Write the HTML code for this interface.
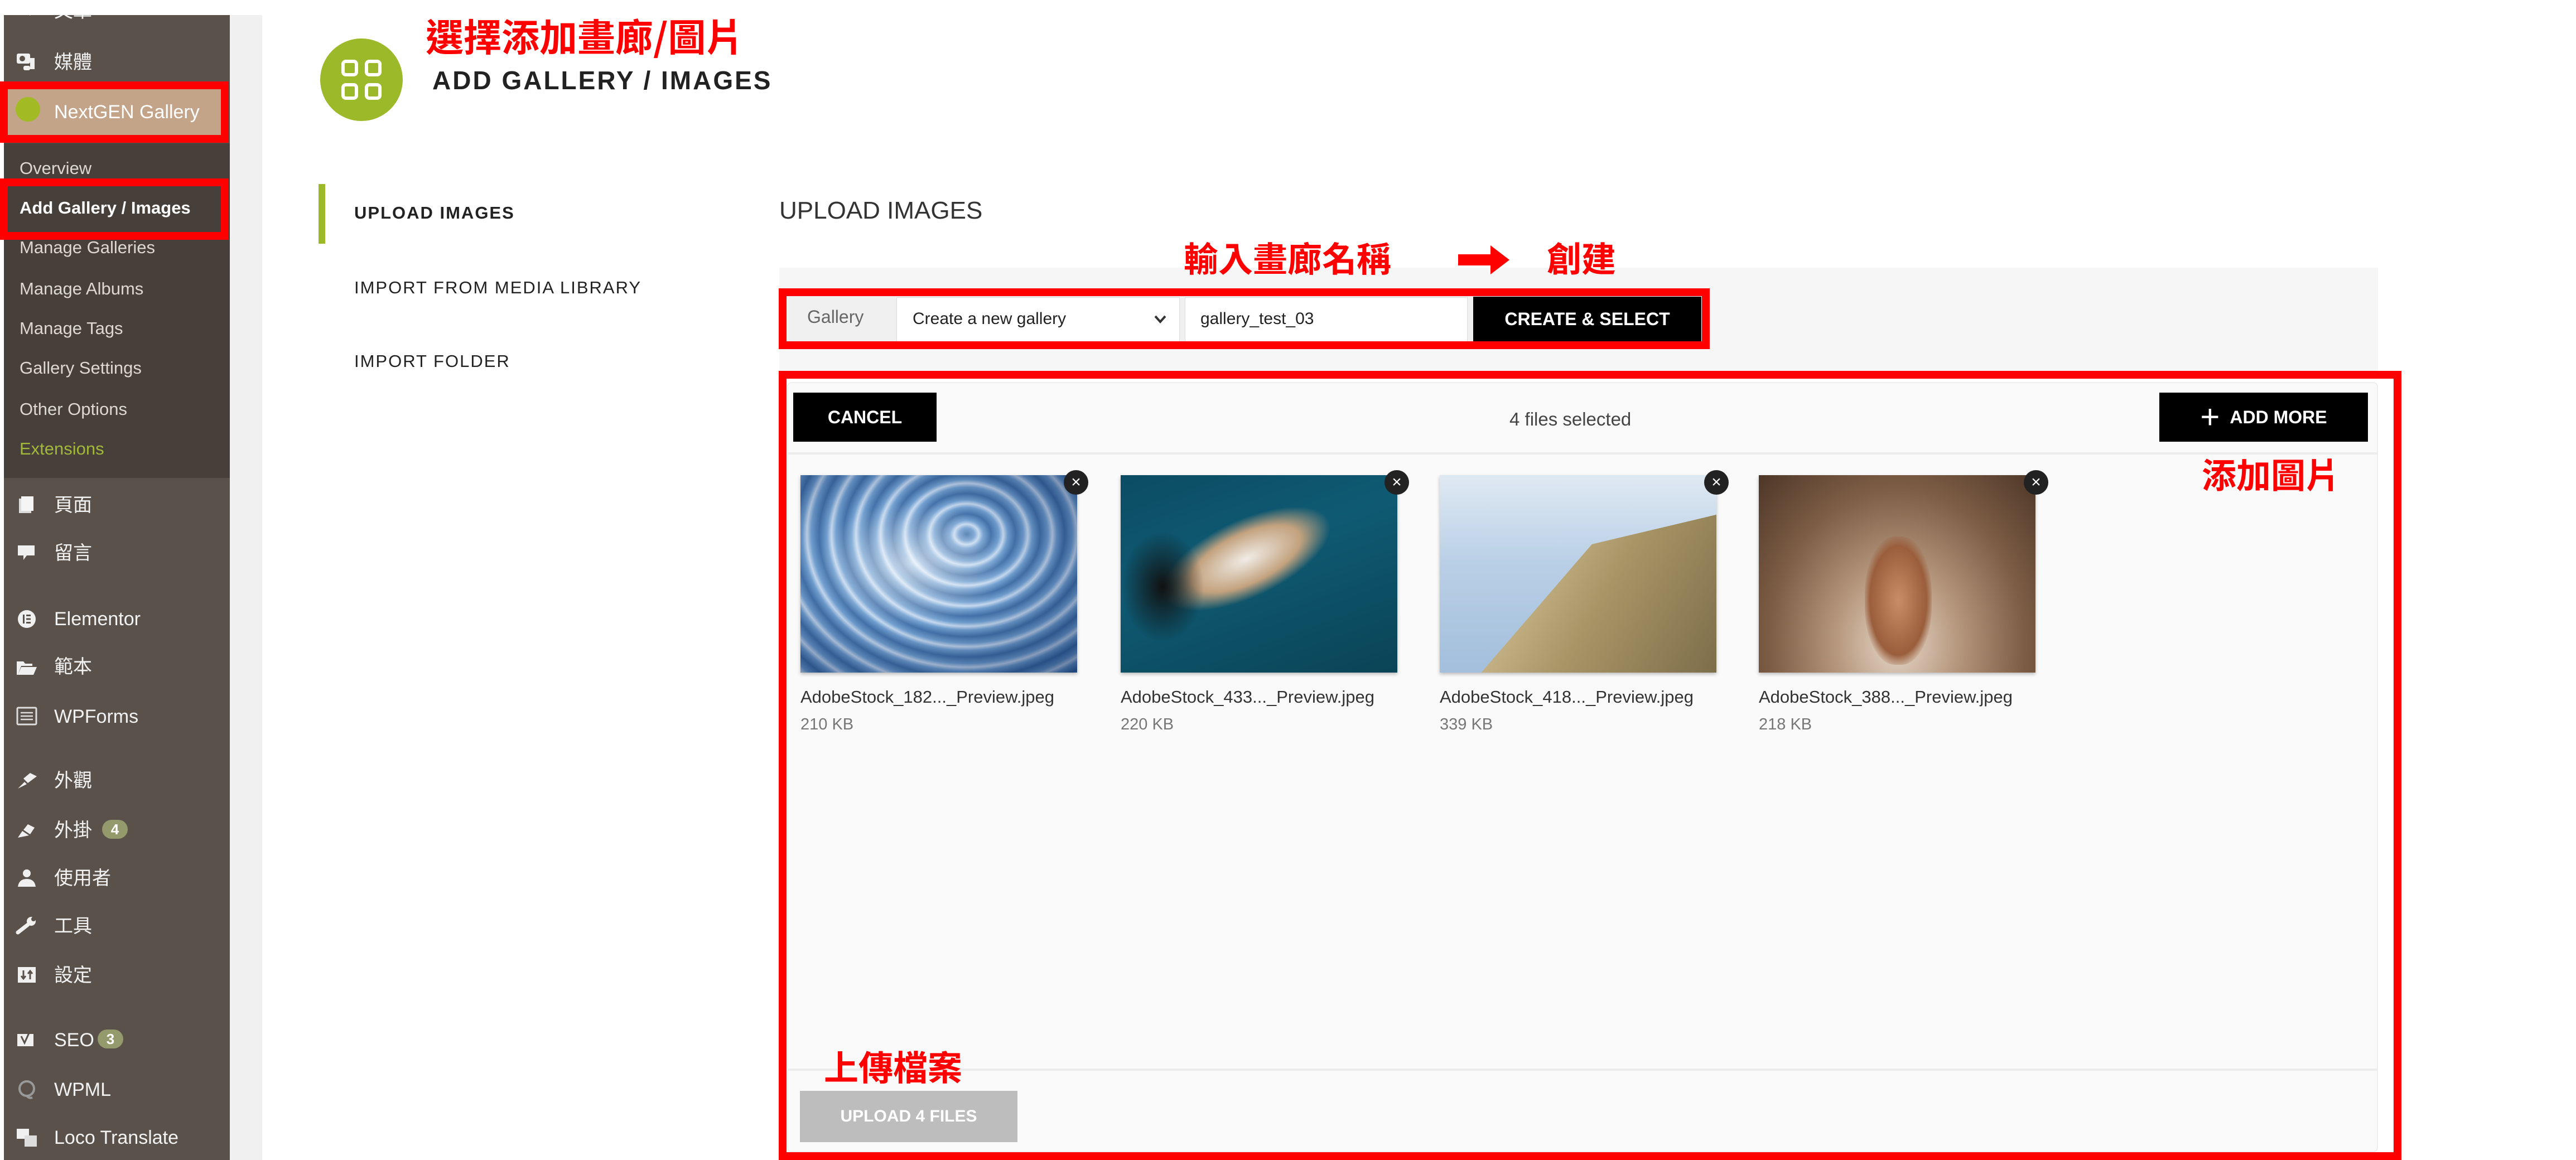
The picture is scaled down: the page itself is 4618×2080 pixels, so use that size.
<!DOCTYPE html>
<html><head><meta charset="utf-8"><style>
*{margin:0;padding:0;box-sizing:border-box}
body{width:4618px;height:2080px;background:#fff;position:relative;overflow:hidden;font-family:"Liberation Sans","Noto Sans CJK TC",sans-serif}
.a{position:absolute}
#side{position:absolute;left:0;top:27px;width:412px;height:2053px;overflow:hidden}
#side .in{position:absolute;left:0;top:-27px;width:412px;height:2080px}
.sb{left:7px;top:27px;width:405px;height:2053px;background:#5a514b}
.sub{left:7px;top:257px;width:405px;height:600px;background:#463f3a}
.mi{position:absolute;left:97px;color:#f2f2f2;font-size:34px;line-height:40px;white-space:nowrap}
.si{position:absolute;left:35px;color:#ddd8d3;font-size:31px;line-height:36px;white-space:nowrap}
.ic{position:absolute;left:28px;width:40px;height:36px}
.red{color:#f00;font-weight:bold;font-family:"Noto Sans CJK TC","Liberation Sans",sans-serif;white-space:nowrap}
.rb{position:absolute;border:14px solid #f00}
.nav{position:absolute;left:635px;font-size:31px;letter-spacing:2px;color:#222;white-space:nowrap}
.btn{position:absolute;background:#000;color:#fff;font-weight:bold;font-size:32px;display:flex;align-items:center;justify-content:center;white-space:nowrap}
.th{position:absolute;top:852px;width:496px;height:354px;box-shadow:0 3px 6px rgba(0,0,0,.25);overflow:hidden}
.x{position:absolute;width:44px;height:44px;border-radius:50%;background:#222;color:#fff;font-size:30px;line-height:44px;text-align:center;top:843px}
.fn{position:absolute;top:1232px;font-size:31px;color:#333;white-space:nowrap}
.fs{position:absolute;top:1283px;font-size:29px;color:#777;white-space:nowrap}
</style></head><body>
<div class="a" style="left:412px;top:27px;width:58px;height:2053px;background:#f0f0f0"></div>
<div id="side"><div class="in">
<div class="a sb"></div>
<div class="a sub"></div>
<div class="mi" style="top:0px">文章</div>
<svg class="ic" style="top:4px" viewBox="0 0 40 36"><path d="M6 34 L20 18 L26 24 L34 4 L14 12 L20 18" fill="#f0f0f0"/></svg>
<div class="mi" style="top:92px">媒體</div>
<svg class="ic" style="top:92px" viewBox="0 0 40 36"><rect x="2" y="4" width="24" height="18" rx="3" fill="#f0f0f0"/><circle cx="12" cy="13" r="5" fill="#5a514b"/><rect x="26" y="12" width="8" height="20" fill="#f0f0f0"/><rect x="14" y="26" width="12" height="8" rx="3" fill="#f0f0f0"/></svg>
<div class="a" style="left:14px;top:160px;width:382px;height:82px;background:#c4a489"></div>
<div class="a" style="left:28px;top:174px;width:44px;height:44px;border-radius:50%;background:#a2ba23"></div>
<div class="mi" style="top:181px;color:#fff">NextGEN Gallery</div>
<div class="rb" style="left:0;top:146px;width:410px;height:110px"></div>
<div class="si" style="top:284px">Overview</div>
<div class="si" style="top:355px;color:#fff;font-weight:bold">Add Gallery / Images</div>
<div class="rb" style="left:0;top:320px;width:410px;height:110px"></div>
<div class="si" style="top:426px">Manage Galleries</div>
<div class="si" style="top:500px">Manage Albums</div>
<div class="si" style="top:571px">Manage Tags</div>
<div class="si" style="top:642px">Gallery Settings</div>
<div class="si" style="top:716px">Other Options</div>
<div class="si" style="top:787px;color:#a3b83a">Extensions</div>
<div class="mi" style="top:886px">頁面</div>
<svg class="ic" style="top:888px" viewBox="0 0 40 36"><rect x="6" y="6" width="22" height="26" fill="#ddd"/><rect x="10" y="2" width="22" height="26" fill="#f5f5f5"/></svg>
<div class="mi" style="top:972px">留言</div>
<svg class="ic" style="top:974px" viewBox="0 0 40 36"><path d="M4 4 H34 V22 H20 L14 30 V22 H4 Z" fill="#f0f0f0"/></svg>
<div class="mi" style="top:1090px">Elementor</div>
<svg class="ic" style="top:1092px" viewBox="0 0 40 36"><circle cx="20" cy="18" r="16" fill="#f0f0f0"/><rect x="13" y="10" width="3" height="16" fill="#5a514b"/><rect x="19" y="10" width="8" height="3" fill="#5a514b"/><rect x="19" y="16.5" width="8" height="3" fill="#5a514b"/><rect x="19" y="23" width="8" height="3" fill="#5a514b"/></svg>
<div class="mi" style="top:1176px">範本</div>
<svg class="ic" style="top:1180px" viewBox="0 0 40 36"><path d="M2 6 H14 L17 10 H30 V14 H10 L4 30 H2 Z" fill="#f0f0f0"/><path d="M10 16 H38 L32 30 H4 Z" fill="#f0f0f0"/></svg>
<div class="mi" style="top:1265px">WPForms</div>
<svg class="ic" style="top:1266px" viewBox="0 0 40 36"><rect x="3" y="3" width="34" height="30" rx="2" fill="none" stroke="#ddd" stroke-width="3"/><path d="M9 12 H31 M9 18 H31 M9 24 H31" stroke="#ddd" stroke-width="2.5"/></svg>
<div class="mi" style="top:1380px">外觀</div>
<svg class="ic" style="top:1382px" viewBox="0 0 40 36"><path d="M4 32 L16 20 L20 24 Z M14 14 L26 4 L38 10 L22 22 Z" fill="#f0f0f0"/></svg>
<div class="mi" style="top:1469px">外掛</div>
<svg class="ic" style="top:1470px" viewBox="0 0 40 36"><path d="M4 32 L12 20 L24 28 Z M14 18 L22 8 L34 14 L26 26 Z" fill="#f0f0f0"/></svg>
<div class="a" style="left:183px;top:1470px;width:46px;height:34px;border-radius:17px;background:#959a6c;color:#fff;font-size:26px;font-weight:bold;text-align:center;line-height:34px">4</div>
<div class="mi" style="top:1555px">使用者</div>
<svg class="ic" style="top:1556px" viewBox="0 0 40 36"><circle cx="20" cy="10" r="7" fill="#f0f0f0"/><path d="M4 34 Q6 20 20 20 Q34 20 36 34 Z" fill="#f0f0f0"/></svg>
<div class="mi" style="top:1641px">工具</div>
<svg class="ic" style="top:1642px" viewBox="0 0 40 36"><path d="M4 30 L22 16" stroke="#f0f0f0" stroke-width="7" stroke-linecap="round"/><circle cx="28" cy="10" r="8" fill="#f0f0f0"/><circle cx="32" cy="6" r="4" fill="#5a514b"/></svg>
<div class="mi" style="top:1729px">設定</div>
<svg class="ic" style="top:1730px" viewBox="0 0 40 36"><rect x="4" y="4" width="32" height="28" fill="#f0f0f0"/><path d="M14 10 V24 M10 20 L14 25 L18 20 M26 26 V12 M22 16 L26 11 L30 16" stroke="#5a514b" stroke-width="3" fill="none"/></svg>
<div class="mi" style="top:1845px">SEO</div>
<svg class="ic" style="top:1846px" viewBox="0 0 40 36"><path d="M3 8 H32 V30 H3 Z" fill="#f0f0f0"/><path d="M10 12 L16 24 L26 2" stroke="#5a514b" stroke-width="3" fill="none"/></svg>
<div class="a" style="left:175px;top:1846px;width:46px;height:34px;border-radius:17px;background:#959a6c;color:#fff;font-size:26px;font-weight:bold;text-align:center;line-height:34px">3</div>
<div class="mi" style="top:1934px">WPML</div>
<svg class="ic" style="top:1936px" viewBox="0 0 40 36"><circle cx="20" cy="16" r="13" fill="none" stroke="#999" stroke-width="4"/><path d="M20 29 Q24 34 30 32" stroke="#999" stroke-width="4" fill="none"/></svg>
<div class="mi" style="top:2020px">Loco Translate</div>
<svg class="ic" style="top:2022px" viewBox="0 0 40 36"><rect x="2" y="2" width="22" height="18" fill="#f0f0f0"/><rect x="16" y="14" width="22" height="20" fill="#ddd"/></svg>
</div></div>

<!-- header -->
<div class="a" style="left:574px;top:69px;width:148px;height:148px;border-radius:50%;background:#9cb92a"></div>
<svg class="a" style="left:610px;top:105px" width="76" height="76" viewBox="0 0 76 76"><g fill="none" stroke="#fff" stroke-width="6"><rect x="5" y="5" width="24" height="24" rx="5"/><rect x="47" y="5" width="24" height="24" rx="5"/><rect x="5" y="47" width="24" height="24" rx="5"/><rect x="47" y="47" width="24" height="24" rx="5"/></g></svg>
<div class="a red" style="left:763px;top:18px;font-size:68px;line-height:90px">選擇添加畫廊/圖片</div>
<div class="a" style="left:775px;top:112px;font-size:46px;font-weight:bold;letter-spacing:3px;color:#222;line-height:64px;white-space:nowrap">ADD GALLERY / IMAGES</div>

<!-- left nav -->
<div class="a" style="left:571px;top:330px;width:12px;height:107px;background:#9cb92a"></div>
<div class="nav" style="top:364px;font-weight:bold">UPLOAD IMAGES</div>
<div class="nav" style="top:498px">IMPORT FROM MEDIA LIBRARY</div>
<div class="nav" style="top:630px">IMPORT FOLDER</div>

<!-- upload heading -->
<div class="a" style="left:1397px;top:352px;font-size:44px;color:#333;line-height:52px;white-space:nowrap">UPLOAD IMAGES</div>
<div class="a" style="left:1397px;top:480px;width:2866px;height:185px;background:#f6f6f6"></div>
<div class="a red" style="left:2122px;top:418px;font-size:62px;line-height:84px">輸入畫廊名稱</div>
<svg class="a" style="left:2614px;top:440px" width="92" height="52" viewBox="0 0 92 52"><path d="M0 16 H58 V0 L92 26 L58 52 V36 H0 Z" fill="#f00"/></svg>
<div class="a red" style="left:2773px;top:418px;font-size:62px;line-height:84px">創建</div>

<!-- gallery row -->
<div class="a" style="left:1410px;top:531px;width:1640px;height:82px;background:#f0f0f0"></div>
<div class="a" style="left:1447px;top:550px;font-size:32px;color:#666;white-space:nowrap">Gallery</div>
<div class="a" style="left:1607px;top:533px;width:508px;height:80px;background:#fff;border:1px solid #ddd"></div>
<div class="a" style="left:1636px;top:555px;font-size:30px;color:#222;white-space:nowrap">Create a new gallery</div>
<svg class="a" style="left:2068px;top:564px" width="24" height="18" viewBox="0 0 24 18"><path d="M3 3 L12 13 L21 3" stroke="#333" stroke-width="4" fill="none"/></svg>
<div class="a" style="left:2124px;top:533px;width:507px;height:80px;background:#fff;border:1px solid #ddd"></div>
<div class="a" style="left:2152px;top:555px;font-size:30px;color:#222;white-space:nowrap">gallery_test_03</div>
<div class="btn" style="left:2641px;top:532px;width:409px;height:81px">CREATE &amp; SELECT</div>
<div class="rb" style="left:1396px;top:517px;width:1669px;height:109px"></div>

<!-- upload area -->
<div class="a" style="left:1411px;top:685px;width:2852px;height:1381px;background:#fafafa;border:2px solid #eee;border-radius:8px"></div>
<div class="a" style="left:1411px;top:811px;width:2852px;height:4px;background:#ececec"></div>
<div class="btn" style="left:1422px;top:704px;width:257px;height:88px">CANCEL</div>
<div class="a" style="left:2706px;top:733px;font-size:33px;color:#444;white-space:nowrap">4 files selected</div>
<div class="btn" style="left:3871px;top:704px;width:374px;height:88px"><span style="font-size:60px;font-weight:normal;margin-right:18px;line-height:60px">+</span>ADD MORE</div>
<div class="a red" style="left:3947px;top:806px;font-size:62px;line-height:84px">添加圖片</div>

<div class="th" style="left:1435px;background:repeating-radial-gradient(ellipse at 60% 30%,#2f5f98 0px,#6f9fcf 14px,#e6f0fa 22px,#6f9fcf 30px,#2f5f98 44px)"><div class="a" style="left:0;top:0;width:496px;height:354px;background:radial-gradient(ellipse at 40% 45%,rgba(240,246,252,.7) 0%,rgba(120,160,210,.3) 40%,rgba(20,50,100,.6) 100%)"></div></div>
<div class="th" style="left:2009px;background:linear-gradient(160deg,#0b4c63 0%,#0f5a73 40%,#0a4456 100%)"><div class="a" style="left:60px;top:80px;width:330px;height:140px;background:radial-gradient(ellipse,#f0ece6 0%,#c3a27e 45%,rgba(0,0,0,0) 70%);transform:rotate(-25deg)"></div><div class="a" style="left:0;top:100px;width:150px;height:200px;background:radial-gradient(ellipse,#111 0%,rgba(0,0,0,0) 70%)"></div></div>
<div class="th" style="left:2581px;background:linear-gradient(180deg,#dfe9f3 0%,#b9cfe6 45%,#a3bfdc 100%)"><div class="a" style="left:0;top:0;width:496px;height:354px;background:linear-gradient(120deg,rgba(0,0,0,0) 15%,#c9b78c 35%,#a89465 60%,#7d6e4b 100%);clip-path:polygon(55% 35%,100% 20%,100% 100%,15% 100%)"></div></div>
<div class="th" style="left:3153px;background:radial-gradient(ellipse at 50% 85%,#e6d8ca 0%,#b89a80 30%,#7d5d45 65%,#4d3627 100%)"><div class="a" style="left:190px;top:110px;width:120px;height:230px;border-radius:45%;background:radial-gradient(ellipse,#c98d66 0%,#9a5e3c 60%,rgba(0,0,0,0) 75%)"></div></div>
<div class="x" style="left:1907px">×</div>
<div class="x" style="left:2482px">×</div>
<div class="x" style="left:3055px">×</div>
<div class="x" style="left:3628px">×</div>
<div class="fn" style="left:1435px">AdobeStock_182..._Preview.jpeg</div>
<div class="fn" style="left:2009px">AdobeStock_433..._Preview.jpeg</div>
<div class="fn" style="left:2581px">AdobeStock_418..._Preview.jpeg</div>
<div class="fn" style="left:3153px">AdobeStock_388..._Preview.jpeg</div>
<div class="fs" style="left:1435px">210 KB</div>
<div class="fs" style="left:2009px">220 KB</div>
<div class="fs" style="left:2581px">339 KB</div>
<div class="fs" style="left:3153px">218 KB</div>

<div class="a" style="left:1411px;top:1916px;width:2852px;height:4px;background:#ececec"></div>
<div class="a red" style="left:1477px;top:1868px;font-size:62px;line-height:84px">上傳檔案</div>
<div class="btn" style="left:1434px;top:1956px;width:390px;height:92px;background:#bdbdbd;font-size:30px">UPLOAD 4 FILES</div>
<div class="rb" style="left:1396px;top:665px;width:2909px;height:1415px"></div>
</body></html>
